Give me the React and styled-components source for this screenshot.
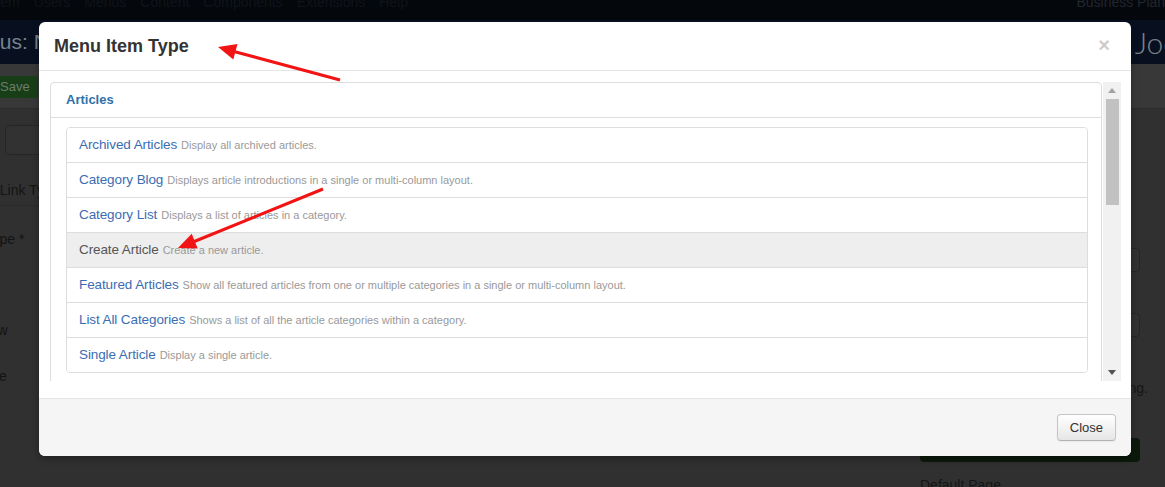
import React from 'react';
import styled, { createGlobalStyle } from 'styled-components';

const GlobalStyle = createGlobalStyle`
  html, body {
    margin: 0;
    padding: 0;
    background: #303030;
    overflow: hidden;
  }
  * {
    box-sizing: border-box;
  }
`;

const font = `"Liberation Sans", Arial, Helvetica, sans-serif`;

const items = [
  { title: 'Archived Articles', desc: 'Display all archived articles.' },
  { title: 'Category Blog', desc: 'Displays article introductions in a single or multi-column layout.' },
  { title: 'Category List', desc: 'Displays a list of articles in a category.' },
  { title: 'Create Article', desc: 'Create a new article.', hover: true },
  { title: 'Featured Articles', desc: 'Show all featured articles from one or multiple categories in a single or multi-column layout.' },
  { title: 'List All Categories', desc: 'Shows a list of all the article categories within a category.' },
  { title: 'Single Article', desc: 'Display a single article.' },
];

const navLinks = ['System', 'Users', 'Menus', 'Content', 'Components', 'Extensions', 'Help'];

const App = () => (
  <>
    <GlobalStyle />
    <Page>
      <TopNav>
        <NavList>
          {navLinks.map((n) => (
            <NavLink key={n}>{n}</NavLink>
          ))}
        </NavList>
        <SiteName>Business Plan.</SiteName>
      </TopNav>

      <HeaderBar>
        <PageTitle>Menus: New Item</PageTitle>
        <Logo>Joomla!</Logo>
      </HeaderBar>

      <Toolbar>
        <SaveButton>Save</SaveButton>
      </Toolbar>

      <Content>
        <LeftCol>
          <TitleInput />
          <Tabs>
            <Tab>Details</Tab>
            <Tab>Link Type</Tab>
          </Tabs>
          <FormRow $top={26}>Menu Item Type *</FormRow>
          <FormRow $top={31}>Link</FormRow>
          <FormRow $top={32}>Target Window</FormRow>
          <FormRow $top={32}>Template Style</FormRow>
        </LeftCol>
        <RightCol>
          <SideInput $top={139} />
          <SideInput $top={41} />
          <SideNote>Hide the page heading.</SideNote>
          <SideButton />
          <SideLabel>Default Page</SideLabel>
        </RightCol>
      </Content>

      <Modal>
        <ModalHeader>
          <ModalTitle>Menu Item Type</ModalTitle>
          <CloseX>×</CloseX>
        </ModalHeader>

        <ModalBody>
          <ScrollArea>
            <Viewport>
              <Panel>
                <PanelHeading>Articles</PanelHeading>
                <PanelBody>
                  <ListGroup>
                    {items.map((it) => (
                      <ListItem key={it.title} $hover={it.hover}>
                        <ItemTitle $hover={it.hover}>{it.title}</ItemTitle>
                        <ItemDesc>{it.desc}</ItemDesc>
                      </ListItem>
                    ))}
                  </ListGroup>
                </PanelBody>
              </Panel>
            </Viewport>
            <Scrollbar>
              <ScrollArrow>
                <svg width="8" height="5" viewBox="0 0 8 5">
                  <path d="M0 5 L4 0 L8 5 Z" fill="#a3a3a3" />
                </svg>
              </ScrollArrow>
              <ScrollTrack>
                <ScrollThumb />
              </ScrollTrack>
              <ScrollArrow>
                <svg width="8" height="5" viewBox="0 0 8 5">
                  <path d="M0 0 L8 0 L4 5 Z" fill="#505050" />
                </svg>
              </ScrollArrow>
            </Scrollbar>
          </ScrollArea>
        </ModalBody>

        <ModalFooter>
          <CloseButton>Close</CloseButton>
        </ModalFooter>
      </Modal>

      <Arrows width="1165" height="487" viewBox="0 0 1165 487">
        <line x1="340" y1="80" x2="234" y2="51.5" stroke="#f21414" strokeWidth="3" />
        <polygon points="218,47 237.5,44 233.3,59.4" fill="#f21414" />
        <line x1="323" y1="189" x2="193" y2="242" stroke="#f21414" strokeWidth="3" />
        <polygon points="178,248 191.7,233.8 197.7,248.6" fill="#f21414" />
      </Arrows>
    </Page>
  </>
);

const Page = styled.div`
  position: relative;
  width: 1165px;
  height: 487px;
  overflow: hidden;
  background: #303030;
  font-family: ${font};
`;

/* dimmed admin page behind the modal */

const TopNav = styled.div`
  height: 20px;
  background: #04070c;
  display: flex;
  justify-content: space-between;
  overflow: hidden;
`;

const NavList = styled.div`
  display: flex;
  gap: 14px;
  margin-left: -27px;
  margin-top: -6px;
`;

const NavLink = styled.span`
  font-size: 14px;
  line-height: 16px;
  color: #111419;
`;

const SiteName = styled.span`
  font-size: 14px;
  line-height: 16px;
  margin-top: -6px;
  margin-right: -4px;
  color: #22262c;
`;

const HeaderBar = styled.div`
  height: 44px;
  background: #081020;
  display: flex;
  align-items: center;
  justify-content: space-between;
  overflow: hidden;
`;

const PageTitle = styled.span`
  font-size: 21px;
  margin-left: -41px;
  color: #76828f;
`;

const Logo = styled.span`
  font-family: Lato, ${font};
  font-weight: 300;
  font-size: 30px;
  color: #7b8087;
  margin-right: -68px;
`;

const Toolbar = styled.div`
  height: 45px;
  background: #383838;
  border-bottom: 1px solid #2c2c2c;
  display: flex;
  align-items: center;
`;

const SaveButton = styled.div`
  height: 22px;
  width: 60px;
  margin-left: -22px;
  padding-left: 22px;
  margin-top: 2px;
  background: #183e18;
  border-radius: 0 3px 3px 0;
  color: #6c7d6c;
  font-size: 13px;
  line-height: 22px;
`;

const Content = styled.div`
  display: grid;
  grid-template-columns: 920px 245px;
`;

const LeftCol = styled.div`
  display: flex;
  flex-direction: column;
  margin-left: -85px;
`;

const TitleInput = styled.div`
  margin: 16px 0 0 90px;
  height: 30px;
  border: 1px solid #262626;
  border-radius: 4px;
  background: #323232;
`;

const Tabs = styled.div`
  margin-top: 20px;
  height: 31px;
  display: flex;
  align-items: center;
  border-bottom: 1px solid #2a2a2a;
`;

const Tab = styled.span`
  padding: 0 14px;
  font-size: 14px;
  color: #141414;
`;

const FormRow = styled.div`
  margin-top: ${(p) => p.$top}px;
  font-size: 14px;
  line-height: 14px;
  color: #131313;
`;

const RightCol = styled.div`
  display: flex;
  flex-direction: column;
  padding-right: 25px;
`;

const SideInput = styled.div`
  margin-top: ${(p) => p.$top}px;
  height: 24px;
  border: 1px solid #262626;
  border-radius: 4px;
  background: #323232;
`;

const SideNote = styled.div`
  margin-top: 44px;
  margin-right: -8px;
  text-align: right;
  font-size: 14px;
  line-height: 14px;
  color: #151515;
`;

const SideButton = styled.div`
  margin-top: 43px;
  height: 24px;
  border-radius: 4px;
  background: #0b190b;
`;

const SideLabel = styled.div`
  margin-top: 16px;
  font-size: 14px;
  line-height: 14px;
  color: #151515;
`;

/* modal */

const Modal = styled.div`
  position: absolute;
  left: 39px;
  top: 22px;
  width: 1092px;
  height: 434px;
  background: #fff;
  border-radius: 6px;
  box-shadow: 0 3px 7px rgba(0, 0, 0, 0.3);
  display: flex;
  flex-direction: column;
`;

const ModalHeader = styled.div`
  height: 49px;
  flex-shrink: 0;
  padding: 0 21px 0 15px;
  border-bottom: 1px solid #e5e5e5;
  display: flex;
  align-items: center;
  justify-content: space-between;
`;

const ModalTitle = styled.h3`
  margin: 0;
  font-size: 18px;
  font-weight: bold;
  color: #333;
`;

const CloseX = styled.span`
  font-size: 20px;
  font-weight: bold;
  line-height: 20px;
  color: #000;
  opacity: 0.2;
  margin-top: -2px;
`;

const ModalBody = styled.div`
  flex: 1;
  padding: 11px 10px 17px 11px;
  min-height: 0;
`;

const ScrollArea = styled.div`
  height: 100%;
  display: flex;
  gap: 1px;
`;

const Viewport = styled.div`
  flex: 1;
  overflow: hidden;
`;

const Panel = styled.div`
  border: 1px solid #ddd;
  border-radius: 4px;
  background: #fff;
`;

const PanelHeading = styled.div`
  height: 35px;
  padding: 0 15px;
  border-bottom: 1px solid #ddd;
  font-size: 13px;
  font-weight: bold;
  line-height: 34px;
  color: #3071a9;
`;

const PanelBody = styled.div`
  padding: 9px 13px 12px 15px;
`;

const ListGroup = styled.div`
  border: 1px solid #ddd;
  border-radius: 4px;
  overflow: hidden;
`;

const ListItem = styled.div`
  height: 35px;
  padding: 0 12px;
  display: flex;
  align-items: center;
  gap: 4px;
  white-space: nowrap;
  background: ${(p) => (p.$hover ? '#eeeeee' : '#fff')};
  & + & {
    border-top: 1px solid #ddd;
  }
  &:first-child {
    height: 34px;
  }
`;

const ItemTitle = styled.span`
  font-size: 13.5px;
  letter-spacing: -0.1px;
  margin-top: -1px;
  color: ${(p) => (p.$hover ? '#555' : '#3b6db3')};
`;

const ItemDesc = styled.span`
  font-size: 11px;
  color: #999;
`;

const Scrollbar = styled.div`
  width: 18px;
  background: #f1f1f1;
  display: flex;
  flex-direction: column;
`;

const ScrollArrow = styled.div`
  height: 17px;
  display: flex;
  align-items: center;
  justify-content: center;
`;

const ScrollTrack = styled.div`
  flex: 1;
  padding: 0 2px 0 3px;
`;

const ScrollThumb = styled.div`
  height: 106px;
  background: #c1c1c1;
`;

const ModalFooter = styled.div`
  height: 58px;
  flex-shrink: 0;
  padding: 15px 15px 0;
  background: #f5f5f5;
  border-top: 1px solid #e5e5e5;
  border-radius: 0 0 6px 6px;
  display: flex;
  justify-content: flex-end;
  align-items: flex-start;
`;

const CloseButton = styled.button`
  height: 27px;
  padding: 0 12px;
  font-family: ${font};
  font-size: 13px;
  color: #333;
  background: linear-gradient(to bottom, #ffffff, #e6e6e6);
  border: 1px solid #c5c5c5;
  border-bottom-color: #b3b3b3;
  border-radius: 4px;
  box-shadow: inset 0 1px 0 rgba(255, 255, 255, 0.2), 0 1px 2px rgba(0, 0, 0, 0.05);
`;

const Arrows = styled.svg`
  position: absolute;
  left: 0;
  top: 0;
  pointer-events: none;
`;

export default App;
